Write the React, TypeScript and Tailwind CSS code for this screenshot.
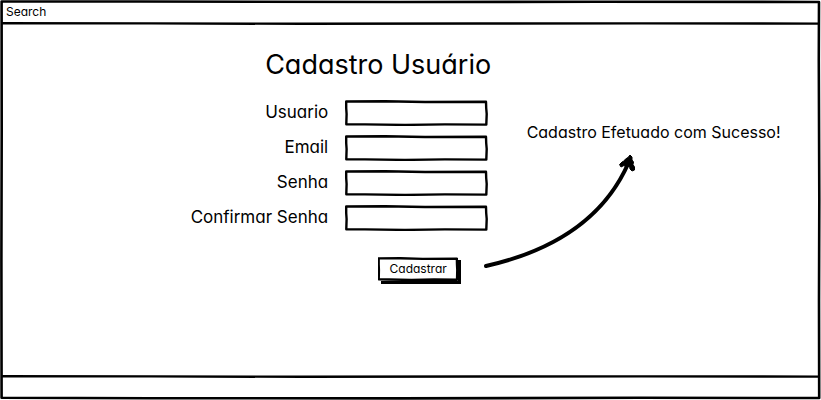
import React from "react";

/** Hand-drawn outline that stretches to the size of its parent. */
function SketchFrame() {
  return (
    <svg
      className="pointer-events-none absolute inset-0 h-full w-full"
      viewBox="0 0 143 26"
      preserveAspectRatio="none"
      aria-hidden="true"
    >
      <path
        d="M1.2 1.5 L40 1.3 L80 2 L141 1.8 L141.2 8 L141.7 14 L141.3 24.6 L100 24.4 L60 24.9 L20 24.4 L1.3 24.2 L1.6 14 L1.2 8 Z"
        fill="none"
        stroke="#000"
        strokeWidth="2.4"
        strokeLinejoin="round"
        vectorEffect="non-scaling-stroke"
      />
    </svg>
  );
}

/** Thin rule with a slight waver. */
function SketchLine() {
  return (
    <svg className="block h-[3px] w-full" viewBox="0 0 818 3" preserveAspectRatio="none" aria-hidden="true">
      <path
        d="M0 1.3 L150 1.4 L300 1.8 L480 1.5 L640 1.4 L818 1.6"
        fill="none"
        stroke="#000"
        strokeWidth="2.4"
        vectorEffect="non-scaling-stroke"
      />
    </svg>
  );
}

function PageFrame() {
  return (
    <svg
      className="pointer-events-none absolute inset-0 h-full w-full"
      viewBox="0 0 821 400"
      preserveAspectRatio="none"
      aria-hidden="true"
    >
      <path
        d="M1.6 1.5 L140 1.5 L400 2 L600 1.7 L819 2 L818.8 60 L819.3 200 L819 300 L819.2 398 L640 397.8 L400 398.4 L150 398.2 L1.6 397.8 L1.4 260 L1.7 130 Z"
        fill="none"
        stroke="#000"
        strokeWidth="2.6"
        strokeLinejoin="round"
        vectorEffect="non-scaling-stroke"
      />
    </svg>
  );
}

const fields = [
  { id: "usuario", label: "Usuario", type: "text" },
  { id: "email", label: "Email", type: "email" },
  { id: "senha", label: "Senha", type: "password" },
  { id: "confirmar", label: "Confirmar Senha", type: "password" },
];

export default function App() {
  return (
    <div className="relative flex min-h-screen flex-col bg-white px-[2px] py-[2px] font-[Inter,'Noto_Sans',sans-serif] text-black [font-feature-settings:'cv11']">
      <PageFrame />
      <header>
        <div className="h-5 px-1 text-xs leading-5">Search</div>
        <SketchLine />
      </header>

      <main className="flex flex-1">
        <form className="w-3/5 pt-[22px]" onSubmit={(e) => e.preventDefault()}>
          <h1 className="pr-px text-right text-[27px] leading-9">Cadastro Usuário</h1>
          <div className="mt-[17px] grid grid-cols-[1fr_143px] gap-x-[17px] gap-y-[9px] pr-1">
            {fields.map((f) => (
              <React.Fragment key={f.id}>
                <label htmlFor={f.id} className="text-right text-[17px] leading-6">
                  {f.label}
                </label>
                <div className="relative h-[26px]">
                  <input
                    id={f.id}
                    type={f.type}
                    className="block h-full w-full bg-transparent px-2 text-sm outline-none"
                  />
                  <SketchFrame />
                </div>
              </React.Fragment>
            ))}
            <button
              type="submit"
              className="relative col-start-2 mt-[17px] ml-[33px] h-6 w-20 bg-white text-xs shadow-[3px_3px_0_0_#000]"
            >
              Cadastrar
              <SketchFrame />
            </button>
          </div>
        </form>

        <section className="flex-1 pt-[95px]">
          <p className="pr-1 text-center text-base leading-6">Cadastro Efetuado com Sucesso!</p>
          <svg className="mt-[9px] -ml-2 block h-[120px] w-[156px]" viewBox="484 153 156 120" aria-hidden="true">
            <path d="M486 266 C548 252 602 222 628 164" fill="none" stroke="#000" strokeWidth="4" strokeLinecap="round" />
            <path
              d="M630 155 L632 157 L632 160 L633.500 162 L633 164.500 L634.500 167 L634.500 170 L632 171 L630 169 L629.500 166 L626 167 L624 165.500 L621 167 L619.500 164.500 L622 162 L624 161 L625.500 159 L628 157.500 Z"
              fill="#000"
              stroke="#000"
              strokeWidth="1"
              strokeLinejoin="round"
            />
          </svg>
        </section>
      </main>

      <footer>
        <SketchLine />
        <div className="h-5" />
      </footer>
    </div>
  );
}
